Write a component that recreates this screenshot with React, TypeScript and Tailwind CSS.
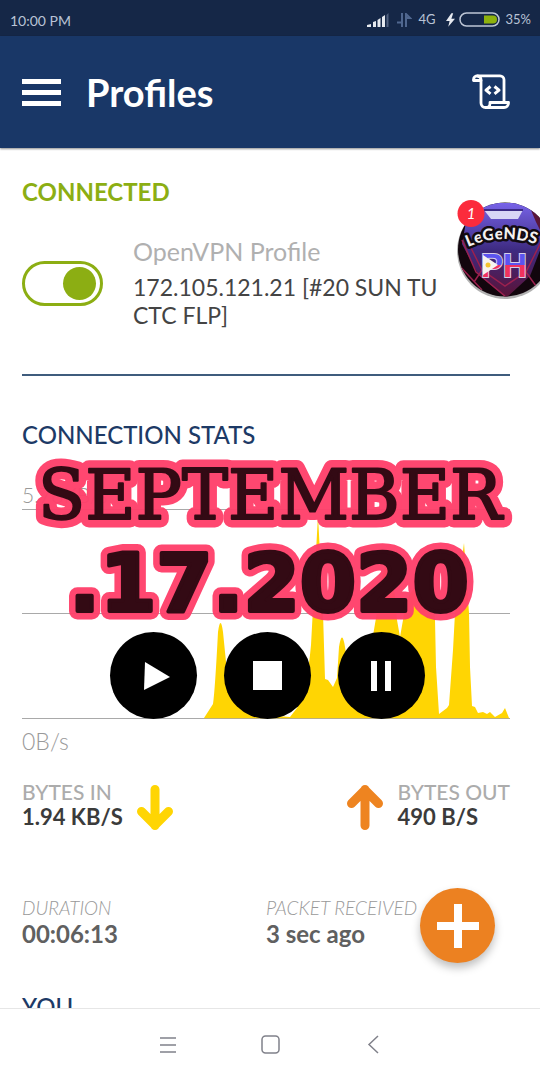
import React from "react";

function StatusBar() {
  return (
    <div className="flex h-9 shrink-0 items-center justify-between bg-[#152747] pl-[10px] pr-[9px] pt-1 text-[14px] text-[#b9c3d6]">
      <span>10:00 PM</span>
      <div className="flex items-center gap-[6px] text-[13px]">
        <svg width="23" height="14" viewBox="0 0 23 14" aria-hidden="true">
          <path d="M0 14v-2l4-1v3zM6 14v-5l3-1v6zM10.500 14v-7l3-2v9zM15 14V4l3-2v12z" fill="#e6e9ef" />
          <path d="M19.500 14V2l2-2v14z" fill="#50607f" />
        </svg>
        <svg width="16" height="14" viewBox="0 0 16 14" fill="none" stroke="#50678f" strokeWidth="2" aria-hidden="true">
          <path d="M6 0v14M1 9.500h5M10 14V1l4 4h-4" />
        </svg>
        <span className="mr-1">4G</span>
        <div className="flex items-center gap-1">
          <svg width="9" height="14" viewBox="0 0 10 15" aria-hidden="true">
            <path d="M6 0L0 8.500h4L2.500 15 10 6H6L8 0z" fill="#e6e9ef" />
          </svg>
          <svg width="41" height="16" viewBox="0 0 41 16" aria-hidden="true">
            <rect x="1" y="1" width="39" height="13" rx="6.500" fill="none" stroke="#bdc6d6" strokeWidth="1.500" />
            <path d="M25 3.500h9a4 4 0 0 1 0 8h-9z" fill="#8db10c" />
          </svg>
        </div>
        <span>35%</span>
      </div>
    </div>
  );
}

function ScrollIcon() {
  return (
    <svg width="38" height="36" viewBox="0 0 38 36" fill="none" stroke="#fff" strokeWidth="2.800" strokeLinejoin="round" strokeLinecap="round" aria-hidden="true">
      <path d="M9 6.500H1.500V5.500A4 4 0 0 1 5.500 1.800H28a4 4 0 0 1 4 4V28" />
      <path d="M5.500 2A4 4 0 0 1 9 6v23a4.500 4.500 0 0 0 4.500 4.500H32a4.500 4.500 0 0 0 4.500-4.500v-.500H18v1a4 4 0 0 1-4 4" />
      <path d="M18.500 12.500L14 16.200l4.500 3.700M22.500 12.500L27 16.200l-4.500 3.700" strokeWidth="3" strokeLinecap="butt" />
    </svg>
  );
}

function Header() {
  return (
    <header className="z-10 flex h-28 shrink-0 items-center bg-[#193767] pl-[22px] pr-[30px] text-white shadow-[0_1px_2px_rgba(0,0,0,0.45)]">
      <button aria-label="Open menu" className="flex w-[39px] flex-col gap-[6px]">
        <span className="h-[5px] w-full bg-white" />
        <span className="h-[5px] w-full bg-white" />
        <span className="h-[5px] w-full bg-white" />
      </button>
      <h1 className="ml-[25px] flex-1 text-[38px] font-bold leading-10">Profiles</h1>
      <button aria-label="View log">
        <ScrollIcon />
      </button>
    </header>
  );
}

function TrafficChart() {
  return (
    <svg className="block h-[210px] w-full" viewBox="22 509 488 210" preserveAspectRatio="none" role="img" aria-label="Traffic over time">
      <path d="M22 509.500H510M22 613.500H510M22 718.500H510" stroke="#a9a9a9" strokeWidth="1" />
      <path
        fill="#ffd503"
        d="M204 718L213 704Q215 690 218 632Q220.500 614 223 632L227 672Q232 706 250 714L290 717L297 708Q307 690 311 645L318 515L323 613L325 679L328 680L333 687L337 678L339 647Q342 628 345 647L350 680L368 665L376 618Q382 565 387 565Q393 565 397 620L400 637L403 620Q407 587 420 587Q434 587 435 620L436 667L439 714L447 708L449 705L453 650L455 613L464 543L469 613L470 667L472 706L475 707L478 713L483 712L487 714L490 712L495 717L502 713L505 708L509 718Z"
      />
      <path d="M204 718.500H510" stroke="#b9ae80" strokeWidth="1" />
    </svg>
  );
}

function ArrowIcon({ className }: { className: string }) {
  return (
    <svg width="36" height="45" viewBox="0 0 36 45" fill="none" stroke="currentColor" strokeWidth="9" strokeLinecap="round" strokeLinejoin="round" className={className} aria-hidden="true">
      <path d="M18 4.500V40.500M4.500 26.500L18 40L31.500 26.500" />
    </svg>
  );
}

function DateSticker() {
  return (
    <svg className="block h-[176px] w-[500px] max-w-none overflow-visible" viewBox="20 450 500 176" textAnchor="middle" strokeLinejoin="round">
      <g fill="#ff406b" stroke="#ff406b" strokeWidth="17" opacity="0.96">
        <use href="#sticker-month" />
        <use href="#sticker-day" />
      </g>
      <g fill="#330a14" stroke="#330a14">
        <text id="sticker-month-face" x="270" y="519" fontFamily="DejaVu Serif, serif" fontSize="69" strokeWidth="2">
          SEPTEMBER
        </text>
        <text id="sticker-day-face" x="269" y="611" fontFamily="DejaVu Sans, sans-serif" fontWeight="bold" fontSize="81" strokeWidth="4">
          .17.2020
        </text>
      </g>
      <defs>
        <text id="sticker-month" x="270" y="519" fontFamily="DejaVu Serif, serif" fontSize="69">
          SEPTEMBER
        </text>
        <text id="sticker-day" x="269" y="611" fontFamily="DejaVu Sans, sans-serif" fontWeight="bold" fontSize="81">
          .17.2020
        </text>
      </defs>
    </svg>
  );
}

function RecorderOverlay() {
  const button = "flex size-[87px] items-center justify-center rounded-full bg-black";
  return (
    <div className="absolute inset-x-0 top-[302px] flex flex-col items-center">
      <DateSticker />
      <div className="mt-[6px] flex gap-[27px] pr-[6px]">
        <button aria-label="Play" className={button}>
          <svg className="ml-2" width="26" height="28" viewBox="0 0 26 28" aria-hidden="true">
            <path d="M1 0L26 15L0 28z" fill="#fff" />
          </svg>
        </button>
        <button aria-label="Stop" className={button}>
          <span className="size-[29px] bg-white" />
        </button>
        <button aria-label="Pause" className={button}>
          <span className="flex gap-2">
            <span className="h-[30px] w-[6px] bg-white" />
            <span className="h-[30px] w-[6px] bg-white" />
          </span>
        </button>
      </div>
    </div>
  );
}

function ChatHead() {
  return (
    <button aria-label="Legends PH, 1 new message" className="absolute right-0 top-[50px]">
      <svg width="84" height="104" viewBox="456 198 84 104" aria-hidden="true">
        <defs>
          <clipPath id="head"><circle cx="505" cy="249.500" r="47" /></clipPath>
          <linearGradient id="gem" x1="0" y1="0" x2="0" y2="1">
            <stop offset="0" stopColor="#7763e8" />
            <stop offset="0.500" stopColor="#3d2a80" />
            <stop offset="1" stopColor="#5b1235" />
          </linearGradient>
          <linearGradient id="flag" x1="0" y1="252" x2="0" y2="277" gradientUnits="userSpaceOnUse">
            <stop offset="0.500" stopColor="#5c53ef" />
            <stop offset="0.500" stopColor="#f0325e" />
          </linearGradient>
          <path id="arc" d="M468 247Q503 231 544 247" />
        </defs>
        <circle cx="505" cy="251" r="48" fill="#000" opacity="0.300" />
        <g clipPath="url(#head)">
          <rect x="456" y="200" width="84" height="100" fill="#12060d" />
          <path d="M466 222L482 203H528L548 230L530 276L506 298L478 274L462 244z" fill="url(#gem)" />
          <path d="M528 203L550 218V250L536 222z" fill="#5a1638" />
          <path d="M462 240L476 272L505 296M466 238L482 270L505 286L526 272L542 240M482 270L474 282M526 272L536 286M456 262L482 290" fill="none" stroke="#9b204e" strokeWidth="1.500" />
          <path d="M484 210H523L518 219H491z" fill="#d8d5f6" />
          <path d="M484 210H523" stroke="#3b2a86" strokeWidth="2" />
        </g>
        <text fontFamily="Lato, sans-serif" fontWeight="900" fontSize="16" fill="#f4f1f1" stroke="#120b12" strokeWidth="5" strokeLinejoin="round" paintOrder="stroke">
          <textPath href="#arc">LeGeNDS</textPath>
        </text>
        <text x="481" y="277" fontFamily="Liberation Sans, sans-serif" fontWeight="bold" fontSize="33" fill="url(#flag)" stroke="#d8cfe8" strokeWidth="2" paintOrder="stroke">
          PH
        </text>
        <path d="M483 255L498 265L483 275z" fill="#f7f3ef" />
        <circle cx="488" cy="265" r="2.500" fill="#f4c430" />
        <circle cx="471" cy="213.500" r="13.500" fill="#fb2b3c" />
        <text x="471" y="219" textAnchor="middle" fontFamily="Lato, sans-serif" fontStyle="italic" fontSize="15" fill="#fff">
          1
        </text>
      </svg>
    </button>
  );
}

function Traffic() {
  return (
    <section className="mt-[22px] flex items-center justify-between leading-[25px]">
      <div className="flex items-center gap-[14px]">
        <dl>
          <dt className="text-[21px] font-medium text-[#acacac]">BYTES IN</dt>
          <dd className="text-[22px] font-bold text-[#3b3b3b]">1.94 KB/S</dd>
        </dl>
        <ArrowIcon className="mt-2 text-[#ffd503]" />
      </div>
      <div className="flex items-center gap-[15px]">
        <ArrowIcon className="mt-2 rotate-180 text-[#ee8420]" />
        <dl>
          <dt className="text-[21px] font-medium text-[#acacac]">BYTES OUT</dt>
          <dd className="text-[22px] font-bold text-[#3b3b3b]">490 B/S</dd>
        </dl>
      </div>
    </section>
  );
}

function Stat({ label, value }: { label: string; value: string }) {
  return (
    <div className="leading-[26px]">
      <dt className="whitespace-nowrap text-[19px] font-light italic text-[#999]">{label}</dt>
      <dd className="text-[24px] font-bold text-[#606060]">{value}</dd>
    </div>
  );
}

function NavBar() {
  return (
    <nav className="flex h-[72px] shrink-0 items-center justify-center gap-[84px] border-t border-[#e6e6e6] bg-white text-[#80818a]">
      <button aria-label="Recent apps">
        <svg width="18" height="18" viewBox="0 0 18 18" fill="none" stroke="currentColor" strokeWidth="1.500" aria-hidden="true">
          <path d="M1 2H17M1 9H17M1 16H17" />
        </svg>
      </button>
      <button aria-label="Home">
        <svg width="19" height="19" viewBox="0 0 19 19" fill="none" stroke="currentColor" strokeWidth="1.500" aria-hidden="true">
          <rect x="1" y="1" width="17" height="17" rx="3.500" />
        </svg>
      </button>
      <button aria-label="Back">
        <svg width="18" height="19" viewBox="0 0 18 19" fill="none" stroke="currentColor" strokeWidth="1.500" aria-hidden="true">
          <path d="M14 1L5 9.500L14 18" />
        </svg>
      </button>
    </nav>
  );
}

export default function App() {
  return (
    <div className="flex h-screen flex-col overflow-hidden bg-white font-['Lato',sans-serif] text-[#444]">
      <StatusBar />
      <Header />
      <main className="relative min-h-0 flex-1 overflow-hidden pl-[22px] pr-[30px] pt-[30px]">
        <h2 className="text-[24px] font-bold leading-7 text-[#8cae13]">CONNECTED</h2>
        <div className="mt-[31px] flex items-center gap-[30px]">
          <input
            id="vpn"
            type="checkbox"
            defaultChecked
            className="relative h-[45px] w-[81px] shrink-0 appearance-none rounded-full border-[3px] border-[#8cae13] before:absolute before:left-[3px] before:top-[3px] before:size-[33px] before:rounded-full before:bg-[#8cae13] checked:before:left-[38px]"
          />
          <label htmlFor="vpn" className="block max-w-[320px] text-[23px] leading-7">
            <span className="mb-2 block text-[25px] text-[#b0b0b0]">OpenVPN Profile</span>
            172.105.121.21 [#20 SUN TU CTC FLP]
          </label>
        </div>
        <hr className="mt-[45px] border-t-2 border-[#3f5c7d]" />
        <h2 className="mt-[45px] text-[24px] font-medium leading-7 text-[#1d3a66]">CONNECTION STATS</h2>
        <p className="mt-8 text-[21px] font-light leading-7 text-[#999]">5.78KB/s</p>
        <TrafficChart />
        <p className="mt-2 text-[23px] font-light leading-7 text-[#999]">0B/s</p>
        <Traffic />
        <dl className="mt-[65px] grid grid-cols-2">
          <Stat label="DURATION" value="00:06:13" />
          <Stat label="PACKET RECEIVED" value="3 sec ago" />
        </dl>
        <h2 className="mt-[46px] text-[24px] font-medium leading-7 text-[#1d3a66]">YOU</h2>
        <RecorderOverlay />
        <ChatHead />
        <button aria-label="Add profile" className="absolute bottom-[45px] right-[45px] flex size-[75px] items-center justify-center rounded-full bg-[#ec8121] shadow-[0_5px_8px_rgba(0,0,0,0.25)]">
          <svg width="42" height="44" viewBox="0 0 42 44" stroke="#fff" strokeWidth="8" aria-hidden="true">
            <path d="M21 0V44M0 22H42" />
          </svg>
        </button>
      </main>
      <NavBar />
    </div>
  );
}
